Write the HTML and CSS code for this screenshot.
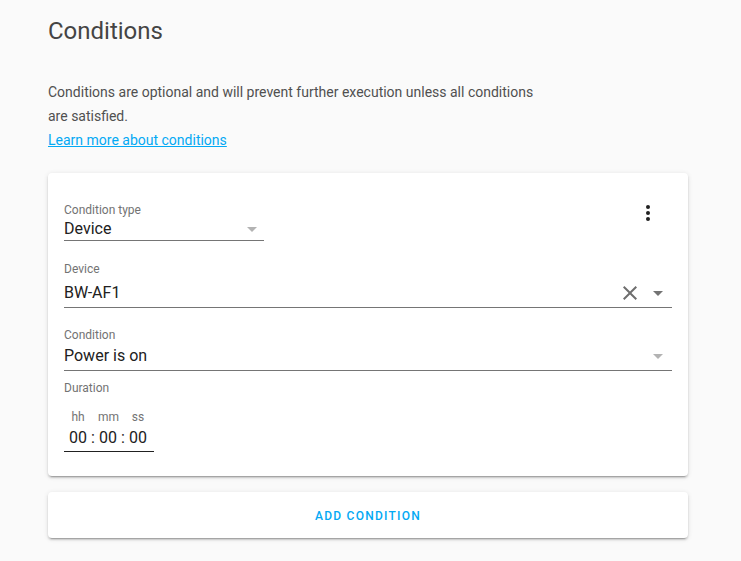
FILE: index.html
```html
<!DOCTYPE html>
<html lang="en">
<head>
<meta charset="utf-8">
<title>Conditions</title>
<link rel="stylesheet" href="styles.css">
</head>
<body>
<main class="page">
  <h1 class="title">Conditions</h1>
  <p class="intro">Conditions are optional and will prevent further execution unless all conditions are satisfied.</p>
  <a class="learn" href="#">Learn more about conditions</a>

  <section class="card condition-card">
    <button class="menu-btn" type="button" aria-label="Menu">
      <svg viewBox="0 0 24 24" width="24" height="24"><circle cx="12" cy="6" r="2"/><circle cx="12" cy="12" r="2"/><circle cx="12" cy="18" r="2"/></svg>
    </button>

    <div class="field field-type">
      <div class="field-label">Condition type</div>
      <div class="field-value">
        <span class="value-text">Device</span>
        <svg class="icon arrow arrow-light" viewBox="0 0 24 24" width="24" height="24"><path d="M7 10l5 5 5-5z"/></svg>
      </div>
    </div>

    <div class="field field-wide field-device">
      <div class="field-label">Device</div>
      <div class="field-value">
        <span class="value-text">BW-AF1</span>
        <svg class="icon clear" viewBox="0 0 24 24" width="24" height="24"><path d="M19 6.41L17.59 5 12 10.59 6.41 5 5 6.41 10.59 12 5 17.59 6.41 19 12 13.41 17.59 19 19 17.59 13.41 12z"/></svg>
        <svg class="icon arrow arrow-dark" viewBox="0 0 24 24" width="24" height="24"><path d="M7 10l5 5 5-5z"/></svg>
      </div>
    </div>

    <div class="field field-wide field-condition">
      <div class="field-label">Condition</div>
      <div class="field-value">
        <span class="value-text">Power is on</span>
        <svg class="icon arrow arrow-light" viewBox="0 0 24 24" width="24" height="24"><path d="M7 10l5 5 5-5z"/></svg>
      </div>
    </div>

    <div class="duration">
      <div class="field-label">Duration</div>
      <div class="time-input">
        <div class="time-grid">
          <span class="time-unit">hh</span><span></span><span class="time-unit">mm</span><span></span><span class="time-unit">ss</span>
        </div>
        <div class="time-grid time-values">
          <span class="time-num">00</span><span class="time-sep">:</span><span class="time-num">00</span><span class="time-sep">:</span><span class="time-num">00</span>
        </div>
      </div>
    </div>
  </section>

  <section class="card add-card">
    <button class="add-btn" type="button">Add condition</button>
  </section>
</main>
</body>
</html>
```

FILE: styles.css
```css
* {
  box-sizing: border-box;
}

html, body {
  margin: 0;
  background: #fafafa;
}

body {
  font-family: Roboto, "Noto Sans", "Liberation Sans", sans-serif;
  color: #212121;
  min-height: 561px;
}

.page {
  width: 688px;
  padding: 15px 0 0 48px;
}

.title {
  margin: 0;
  font-size: 24px;
  line-height: 32px;
  font-weight: 400;
  color: #444444;
}

.intro {
  margin: 33px 0 0;
  width: 495px;
  font-size: 14px;
  line-height: 24px;
  color: #505050;
}

.learn {
  display: block;
  width: max-content;
  font-size: 14px;
  line-height: 24px;
  color: #03a9f4;
  text-decoration: underline;
}

.card {
  background: #ffffff;
  border-radius: 4px;
  box-shadow: 0 2px 2px 0 rgba(0, 0, 0, 0.14), 0 1px 5px 0 rgba(0, 0, 0, 0.12), 0 3px 1px -2px rgba(0, 0, 0, 0.2);
}

.condition-card {
  position: relative;
  margin-top: 21px;
  padding: 30px 16px 24px;
}

.menu-btn {
  position: absolute;
  top: 20px;
  right: 20px;
  width: 40px;
  height: 40px;
  padding: 8px;
  border: 0;
  background: none;
  display: flex;
  align-items: center;
  justify-content: center;
  fill: #212121;
}

.field-label {
  font-size: 12px;
  line-height: 15px;
  color: #737373;
}

.field-value {
  display: flex;
  align-items: center;
  height: 24px;
  border-bottom: 1px solid #757575;
  box-sizing: content-box;
}

.value-text {
  flex: 1;
  font-size: 16px;
  line-height: 24px;
  color: #212121;
}

.field-type {
  width: 200px;
}

.field-type .field-value {
  height: 22px;
}

.field-wide {
  width: 608px;
}

.field-wide .field-value {
  padding-bottom: 2px;
  padding-right: 2px;
}

.field-device {
  margin-top: 21px;
}

.field-device .field-value {
  margin-top: 4px;
}

.field-condition {
  margin-top: 20px;
}

.field-condition .field-value {
  margin-top: 1px;
}

.icon {
  flex: none;
  display: block;
}

.arrow-light {
  fill: #b3b3b3;
}

.arrow-dark {
  fill: #737373;
}

.clear {
  fill: #6e6e6e;
  margin-right: 4px;
}

.duration {
  margin-top: 10px;
}

.time-input {
  margin-top: 14px;
  width: 90px;
  padding-left: 4px;
  border-bottom: 1px solid #212121;
}

.time-grid {
  display: grid;
  grid-template-columns: 20px 10px 20px 10px 20px;
}

.time-unit {
  font-size: 12px;
  line-height: 15px;
  color: #737373;
  text-align: center;
}

.time-values {
  margin-top: 1px;
  padding-bottom: 1px;
}

.time-num {
  font-size: 16px;
  line-height: 24px;
  color: #212121;
  text-align: center;
}

.time-sep {
  font-size: 16px;
  line-height: 24px;
  color: #212121;
  padding-left: 3px;
}

.add-card {
  margin-top: 16px;
  padding: 6px 16px 4px;
}

.add-btn {
  display: block;
  width: 100%;
  height: 36px;
  border: 0;
  background: none;
  font-family: Roboto, "Noto Sans", sans-serif;
  font-size: 12px;
  font-weight: 500;
  letter-spacing: 1.25px;
  text-transform: uppercase;
  color: #03a9f4;
}
```
